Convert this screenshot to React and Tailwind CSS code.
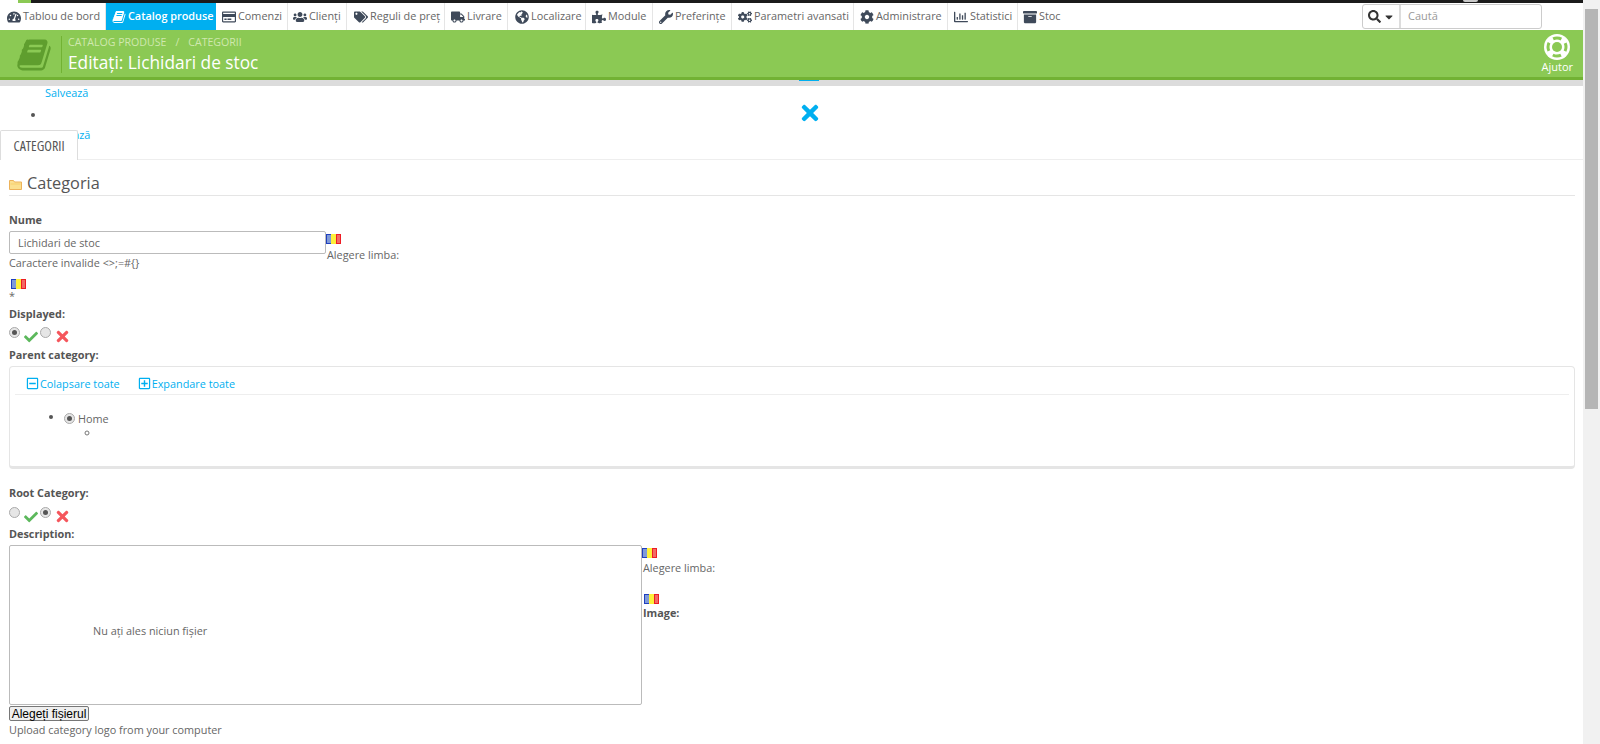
import {
  FaTachometerAlt, FaRegCreditCard, FaUsers, FaTags, FaTruck, FaGlobeAmericas, FaPuzzlePiece, FaWrench,
  FaCogs, FaCog, FaRegChartBar, FaArchive, FaSearch, FaCaretDown, FaTimes, FaCheck,
  FaRegMinusSquare, FaRegPlusSquare,
} from "react-icons/fa";

// slanted book, the old font awesome one
const Book = ({ className }) => (
  <svg viewBox="0 0 1792 1792" fill="currentColor" className={className}>
    <path transform="translate(64 0)" d="M1639 478q40 57 18 129l-275 906q-19 64-76.5 107.5t-122.5 43.5h-923q-77 0-148.5-53.5t-99.5-131.5q-24-67-2-127 0-4 3-27t4-37q1-8-3-21.5t-3-19.5q2-11 8-21t16.5-23.5 16.5-23.5q23-38 45-91.5t30-91.5q3-10 .5-30t-.5-28q3-11 17-28t17-23q21-36 42-92t25-90q1-9-2.5-32t.5-28q4-13 22-30.5t22-22.5q19-26 42.5-84.5t27.5-96.5q1-8-3-25.5t-2-26.5q2-8 9-18t18-23 17-21q8-12 16.5-30.5t15-35 16-36 19.5-32 26.5-23.5 36-11.5 47.5 5.5l-1 3q38-9 51-9h761q74 0 114 56t18 130l-274 906q-36 119-71.5 153.5t-128.5 34.5h-869q-27 0-38 15-11 16-1 43 24 70 144 70h923q29 0 56-15.5t35-41.5l300-987q7-22 5-57 38 15 59 43zm-1064 2q-4 13 2 22.5t20 9.5h608q13 0 25.5-9.5t16.5-22.5l21-64q4-13-2-22.5t-20-9.5h-608q-13 0-25.5 9.5t-16.5 22.5zm-83 256q-4 13 2 22.5t20 9.5h608q13 0 25.5-9.5t16.5-22.5l21-64q4-13-2-22.5t-20-9.5h-608q-13 0-25.5 9.5t-16.5 22.5z" />
  </svg>
);

const LifeRing = () => (
  <svg width="26" height="26" viewBox="0 0 26 26">
    <circle cx="13" cy="13" r="13" fill="#ffffff" />
    <circle cx="13" cy="13" r="9" fill="none" stroke="#8bc954" strokeWidth="3" strokeDasharray="8.5 5.64" strokeDashoffset="4.25" />
    <circle cx="13" cy="13" r="5" fill="#8bc954" />
  </svg>
);

const Folder = () => (
  <svg width="13" height="11" viewBox="0 0 13 11" className="mt-[3px]">
    <path d="M.5 1.5h4l1 1.5h7v7.500h-12z" fill="#fbe08f" stroke="#edb25a" />
    <path d="M1.500 5h10" stroke="#f7cf6d" />
  </svg>
);

const Flag = ({ className = "" }) => (
  <svg width="15" height="10" viewBox="0 0 15 10" className={className}>
    <rect width="5" height="10" fill="#1f3fbf" />
    <rect x="1" y="1" width="4" height="8" fill="#7f9ad8" />
    <rect x="5" width="5" height="10" fill="#fdf03a" />
    <rect x="10" width="5" height="10" fill="#ee1c25" />
    <rect x="11" y="1" width="3" height="8" fill="#f26a63" />
  </svg>
);

const Radio = ({ checked }) => (
  <span className="flex h-[11px] w-[11px] shrink-0 items-center justify-center rounded-full border border-[#aaaaaa] bg-[#e6e6e6]">
    {checked && <span className="h-[5px] w-[5px] rounded-full bg-[#555555]" />}
  </span>
);

const YesNo = ({ value }) => (
  <div className="flex h-[18px] items-start">
    <span className="mt-[2px]"><Radio checked={value} /></span>
    <FaCheck className="ml-[4px] mt-[5px] text-[14px] text-[#5cb85c]" />
    <span className="ml-[2px] mt-[2px]"><Radio checked={!value} /></span>
    <FaTimes className="ml-[3px] mt-[3px] text-[17px] text-[#f5565c]" />
  </div>
);

const menu = [
  { label: "Tablou de bord", Icon: FaTachometerAlt, width: "w-[106px]", pad: "pl-[7px]" },
  { label: "Catalog produse", Icon: Book, width: "w-[110px]", pad: "pl-[6px]", active: true },
  { label: "Comenzi", Icon: FaRegCreditCard, width: "w-[72px]", pad: "pl-[6px]" },
  { label: "Clienți", Icon: FaUsers, width: "w-[59px]", pad: "pl-[5px]" },
  { label: "Reguli de preț", Icon: FaTags, width: "w-[98px]", pad: "pl-[7px]" },
  { label: "Livrare", Icon: FaTruck, width: "w-[63px]", pad: "pl-[6px]" },
  { label: "Localizare", Icon: FaGlobeAmericas, width: "w-[78px]", pad: "pl-[7px]" },
  { label: "Module", Icon: FaPuzzlePiece, width: "w-[67px]", pad: "pl-[6px]" },
  { label: "Preferințe", Icon: FaWrench, width: "w-[79px]", pad: "pl-[6px]" },
  { label: "Parametri avansati", Icon: FaCogs, width: "w-[122px]", pad: "pl-[6px]" },
  { label: "Administrare", Icon: FaCog, width: "w-[94px]", pad: "pl-[6px]" },
  { label: "Statistici", Icon: FaRegChartBar, width: "w-[70px]", pad: "pl-[6px]" },
  { label: "Stoc", Icon: FaArchive, width: "w-[50px] border-r-0", pad: "pl-[5px]" },
];

const Label = ({ children }) => (
  <div className="text-[10.85px] font-bold leading-[17px] text-[#555555]">{children}</div>
);

export default function App() {
  return (
    <div className="flex h-[744px] overflow-hidden bg-white font-['Open_Sans',sans-serif] text-[10.85px] text-[#666666]">
      <div className="w-[1583px] shrink-0">
        {/* top strip */}
        <div className="flex h-[3px] bg-[#1b1b1b]">
          <div className="h-full w-[18px] bg-white" />
          <div className="h-full w-[13px] bg-[#8bc954]" />
          <div className="ml-[1432px] h-[2px] w-[15px] rounded-b-[4px] bg-[#c8c8c8]" />
        </div>

        {/* menu */}
        <div className="flex h-[27px] items-stretch justify-between bg-white pr-[41px]">
          <nav className="flex">
            {menu.map(({ label, Icon, width, pad, active }) => (
              <a
                key={label}
                className={
                  active
                    ? `flex items-center gap-[2px] bg-[#00aff0] font-semibold text-white ${width} ${pad}`
                    : `flex items-center gap-[2px] border-r border-[#e5e5e5] text-[#666666] ${width} ${pad}`
                }
              >
                <Icon className={active ? "h-[14px] w-[14px] shrink-0" : "h-[14px] w-[14px] shrink-0 text-[#3f4a5a]"} />
                <span className="whitespace-nowrap">{label}</span>
              </a>
            ))}
          </nav>
          <div className="mt-[1px] flex h-[25px] w-[180px] rounded-[3px] border border-[#cccccc]">
            <button className="flex w-[38px] shrink-0 items-center justify-center gap-[2px] border-r-2 border-[#dddddd] text-[#333333]">
              <FaSearch className="text-[13px]" />
              <FaCaretDown className="text-[12px]" />
            </button>
            <input
              placeholder="Caută"
              className="w-full min-w-0 pl-[7px] text-[11px] outline-none placeholder:text-[#999999]"
            />
          </div>
        </div>

        {/* page head */}
        <header className="flex h-[50px] items-stretch justify-between border-b-[3px] border-[#72b234] bg-[#8bc954] pl-[16px] pr-[10px]">
          <div className="flex">
            <Book className="mt-[7px] h-[36px] w-[36px] text-[#5f9e2e]" />
            <div className="mb-[4px] ml-[9px] mt-[6px] border-l border-[#72b234] pl-[6px]">
              <div className="flex h-[14px] items-center text-[10.6px] uppercase text-[#cfe8ae]">
                <span>Catalog produse</span>
                <span className="mx-[9px]">/</span>
                <span>Categorii</span>
              </div>
              <div className="mt-[2px] text-[17.3px] leading-[22px] text-white">Editați: Lichidari de stoc</div>
            </div>
          </div>
          <div className="flex flex-col items-center pt-[4px] text-white">
            <LifeRing />
            <span className="text-[11px] leading-[14px]">Ajutor</span>
          </div>
        </header>

        {/* shadow band with the little blue mark */}
        <div className="flex h-[6px] justify-center bg-[#dcdcdc] pl-[34px]">
          <div className="h-[1px] w-[20px] bg-[#00aff0]" />
        </div>

        {/* broken toolbar, the tab sits over it */}
        <div className="relative flex h-[74px] border-b border-[#eeeeee]">
          <div className="w-[798px] leading-[15px] text-[#00aff0]">
            <div className="mt-[-1px] pl-[45px]">Salvează</div>
            <ul className="mt-[7px] list-disc pl-[46px] text-[#555555]">
              <li className="h-[17px]" />
            </ul>
            <div className="mt-[3px] pl-[47px]">Salvează</div>
          </div>
          <FaTimes className="mt-[15px] text-[24px] text-[#00aff0]" />
          <div className="absolute bottom-[-1px] left-0 flex h-[30px] w-[78px] items-center justify-center rounded-t-[2px] border border-b-0 border-[#dddddd] bg-white text-[14px] uppercase text-[#555555] font-stretch-condensed">
            Categorii
          </div>
        </div>

        {/* form */}
        <div className="pl-[9px] pr-[8px]">
          <div className="mt-[13px] flex h-[23px] items-center gap-[5px] border-b border-[#e5e5e5] pb-[2px]">
            <Folder />
            <h3 className="text-[16.3px] leading-[20px] text-[#555555]">Categoria</h3>
          </div>

          <div className="mt-[15px]"><Label>Nume</Label></div>
          <div className="mt-[3px] flex h-[23px]">
            <input
              defaultValue="Lichidari de stoc"
              className="h-[23px] w-[317px] rounded-[2px] border border-[#bbbbbb] pl-[8px] text-[10.85px] text-[#666666] outline-none"
            />
            <div>
              <Flag className="mt-[3px]" />
              <div className="mt-[2px] whitespace-nowrap pl-[1px] leading-[17px]">Alegere limba:</div>
            </div>
          </div>
          <div className="leading-[17px]">Caractere invalide &lt;&gt;;=#{"{}"}</div>
          <Flag className="ml-[2px] mt-[8px]" />
          <div className="h-[13px] leading-[13px]">*</div>
          <div className="mt-[3px]"><Label>Displayed:</Label></div>
          <div className="mt-[3px]"><YesNo value={true} /></div>
          <div className="mt-[3px]"><Label>Parent category:</Label></div>

          <div className="mt-[3px] h-[103px] rounded-[4px] border border-[#e5e5e5] border-b-[3px] px-[5px] pt-[8px]">
            <div className="flex h-[20px] items-start gap-[18px] border-b border-[#eeeeee] pl-[11px] text-[#00aff0]">
              <a className="flex items-center gap-[1px] leading-[17px]"><FaRegMinusSquare className="text-[13px]" />Colapsare toate</a>
              <a className="flex items-center gap-[1px] leading-[17px]"><FaRegPlusSquare className="text-[13px]" />Expandare toate</a>
            </div>
            <ul className="mt-[14px] list-disc pl-[49px] text-[#555555]">
              <li>
                <span className="flex items-center gap-[3px] leading-[17px] text-[#666666]"><Radio checked />Home</span>
                <ul className="list-[circle] pl-[36px]"><li className="h-[11px] leading-[11px] text-[#777777]" /></ul>
              </li>
            </ul>
          </div>

          <div className="mt-[15px]"><Label>Root Category:</Label></div>
          <div className="mt-[4px]"><YesNo value={false} /></div>
          <div className="mt-[2px]"><Label>Description:</Label></div>

          <div className="mt-[3px] flex">
            <div className="flex h-[160px] w-[633px] items-center rounded-[2px] border border-[#bbbbbb] pl-[83px] pt-[12px]">
              Nu ați ales niciun fișier
            </div>
            <div>
              <Flag className="mt-[3px]" />
              <div className="mt-[1px] pl-[1px] leading-[17px]">Alegere limba:</div>
              <Flag className="ml-[2px] mt-[18px]" />
              <div className="pl-[1px]"><Label>Image:</Label></div>
            </div>
          </div>

          <button className="mt-[1px] flex h-[15px] w-[80px] items-center justify-center rounded-[2px] border border-[#777777] bg-[#efefef] font-['Liberation_Sans',sans-serif] text-[12px] text-black">
            Alegeți fișierul
          </button>
          <div className="leading-[17px]">Upload category logo from your computer</div>
        </div>
      </div>

      {/* window scrollbar */}
      <div className="w-[17px] shrink-0 bg-[#f1f1f1] px-[2px] pt-[9px]">
        <div className="h-[400px] bg-[#b5b5b5]" />
      </div>
    </div>
  );
}
